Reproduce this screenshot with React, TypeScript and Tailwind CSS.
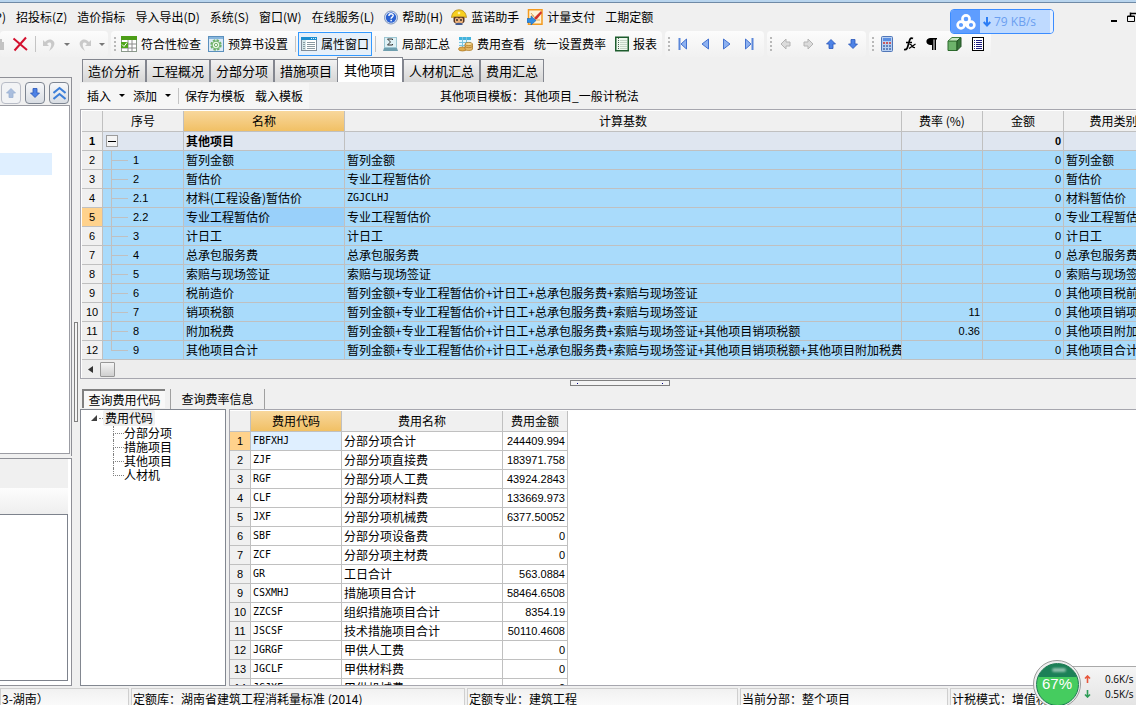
import type { ReactNode } from "react";

type FeeRow = {
  no: string;
  name: string;
  base: string;
  rate?: string;
  kind: string;
};

const FEES: FeeRow[] = [
  { no: "1", name: "暂列金额", base: "暂列金额", kind: "暂列金额" },
  { no: "2", name: "暂估价", base: "专业工程暂估价", kind: "暂估价" },
  { no: "2.1", name: "材料(工程设备)暂估价", base: "ZGJCLHJ", kind: "材料暂估价" },
  { no: "2.2", name: "专业工程暂估价", base: "专业工程暂估价", kind: "专业工程暂估价" },
  { no: "3", name: "计日工", base: "计日工", kind: "计日工" },
  { no: "4", name: "总承包服务费", base: "总承包服务费", kind: "总承包服务费" },
  { no: "5", name: "索赔与现场签证", base: "索赔与现场签证", kind: "索赔与现场签证" },
  {
    no: "6",
    name: "税前造价",
    base: "暂列金额+专业工程暂估价+计日工+总承包服务费+索赔与现场签证",
    kind: "其他项目税前造价",
  },
  {
    no: "7",
    name: "销项税额",
    base: "暂列金额+专业工程暂估价+计日工+总承包服务费+索赔与现场签证",
    rate: "11",
    kind: "其他项目销项税额",
  },
  {
    no: "8",
    name: "附加税费",
    base: "暂列金额+专业工程暂估价+计日工+总承包服务费+索赔与现场签证+其他项目销项税额",
    rate: "0.36",
    kind: "其他项目附加税费",
  },
  {
    no: "9",
    name: "其他项目合计",
    base: "暂列金额+专业工程暂估价+计日工+总承包服务费+索赔与现场签证+其他项目销项税额+其他项目附加税费",
    kind: "其他项目合计",
  },
];

const CODES = [
  ["FBFXHJ", "分部分项合计", "244409.994"],
  ["ZJF", "分部分项直接费", "183971.758"],
  ["RGF", "分部分项人工费", "43924.2843"],
  ["CLF", "分部分项材料费", "133669.973"],
  ["JXF", "分部分项机械费", "6377.50052"],
  ["SBF", "分部分项设备费", "0"],
  ["ZCF", "分部分项主材费", "0"],
  ["GR", "工日合计", "563.0884"],
  ["CSXMHJ", "措施项目合计", "58464.6508"],
  ["ZZCSF", "组织措施项目合计", "8354.19"],
  ["JSCSF", "技术措施项目合计", "50110.4608"],
  ["JGRGF", "甲供人工费", "0"],
  ["JGCLF", "甲供材料费", "0"],
  ["JGJXF", "甲供机械费", "0"],
];

const TABS = ["造价分析", "工程概况", "分部分项", "措施项目", "其他项目", "人材机汇总", "费用汇总"];

const cell = "h-[19px] overflow-hidden border-r border-b border-[#c0c0c0] p-0 px-0.5 leading-[18px] whitespace-nowrap";
const head = "h-[21px] border-r border-b border-[#c0c0c0] bg-[#f0f0f0] p-0 text-center leading-5 font-normal whitespace-nowrap";
const gold = "h-[21px] border-r border-b border-[#c0c0c0] bg-linear-to-b from-[#f8d79b] to-[#f1c064] p-0 text-center leading-5 font-normal";
const num = "block text-[11px] leading-[18px] font-['Liberation_Sans','Noto_Sans_CJK_SC',sans-serif]";
const mono = "block text-[10px] leading-[18px] font-['DejaVu_Sans_Mono',monospace]";

function Svg({ children, w = 16, h = 16 }: { children: ReactNode; w?: number; h?: number }) {
  return (
    <svg width={w} height={h} viewBox={`0 0 ${w} ${h}`} className="shrink-0" aria-hidden="true">
      {children}
    </svg>
  );
}

function BlueArrow({ down = false, pale = false }: { down?: boolean; pale?: boolean }) {
  return (
    <Svg w={10} h={10}>
      <path
        d={down ? "M3 0.5h4v4.5h2.5L5 9.5 0.5 5H3z" : "M3 9.5h4V5h2.5L5 0.5 0.5 5H3z"}
        fill={pale ? "#a9bddd" : "#4d82e6"}
        stroke={pale ? "#9bb0d2" : "#2a56b8"}
        strokeWidth="0.8"
      />
    </Svg>
  );
}

function GreyArrow({ right = false }: { right?: boolean }) {
  return (
    <Svg w={11} h={12}>
      <path
        d={right ? "M1 4h4V1l5 5-5 5V8H1z" : "M10 4H6V1L1 6l5 5V8h4z"}
        fill="#dcdcdc"
        stroke="#b4b4b4"
      />
    </Svg>
  );
}

function Caret({ grey = false }: { grey?: boolean }) {
  return (
    <Svg w={6} h={3}>
      <path d="M0 0h6L3 3z" fill={grey ? "#777" : "#000"} />
    </Svg>
  );
}

function Grip() {
  return (
    <span className="flex w-2 shrink-0 flex-col items-center gap-0.5" aria-hidden="true">
      <i className="size-0.5 bg-[#b8b8b8]" />
      <i className="size-0.5 bg-[#b8b8b8]" />
      <i className="size-0.5 bg-[#b8b8b8]" />
      <i className="size-0.5 bg-[#b8b8b8]" />
    </span>
  );
}

function Sep() {
  return <span className="h-4 w-px shrink-0 bg-[#c4c4c4]" />;
}

function Band({ children, className }: { children: ReactNode; className: string }) {
  return (
    <div
      className={`flex h-[26px] shrink-0 items-center rounded-sm bg-linear-to-b from-[#fcfcfc] to-[#f1f1f1] ${className}`}
    >
      {children}
    </div>
  );
}

function Tool({ icon, label, active = false }: { icon?: ReactNode; label: string; active?: boolean }) {
  return (
    <button
      className={
        active
          ? "flex h-6 shrink-0 items-center gap-1 border border-[#3399ff] bg-[#e6f0fa] px-0.5 whitespace-nowrap"
          : "flex h-6 shrink-0 items-center gap-1 whitespace-nowrap"
      }
    >
      {icon}
      {label}
    </button>
  );
}

function IconButton({ label, children }: { label: string; children: ReactNode }) {
  return (
    <button aria-label={label} className="flex h-5 shrink-0 items-center justify-center">
      {children}
    </button>
  );
}

function MenuBar() {
  return (
    <nav className="flex h-7 shrink-0 items-center gap-2.5 overflow-hidden whitespace-nowrap">
      <button className="flex w-1.5 justify-end overflow-hidden">P)</button>
      <button>招投标(Z)</button>
      <button>造价指标</button>
      <button>导入导出(D)</button>
      <button>系统(S)</button>
      <button>窗口(W)</button>
      <button>在线服务(L)</button>
      <button className="flex items-center gap-1">
        <Svg w={14} h={15}>
          <circle cx="7" cy="7.5" r="6.500" fill="#dfe8f6" stroke="#7b93bd" />
          <circle cx="7" cy="7.5" r="5.2" fill="#2b62d2" />
          <path d="M4.900 6c0-3 4.300-2.700 4.300-.4 0 1.500-2.100 1.500-2.100 3.100" fill="none" stroke="#fff" strokeWidth="1.4" />
          <rect x="6.400" y="9.800" width="1.500" height="1.500" fill="#fff" />
        </Svg>
        帮助(H)
      </button>
      <button className="-ml-0.5 flex items-center gap-1">
        <Svg>
          <path d="M2.500 8h11v4c0 4-11 4-11 0z" fill="#59351f" />
          <path d="M4 9.500l2-1 2 1 2-1 2 1v3c0 3-8 3-8 0z" fill="#edb37c" />
          <path d="M.5 8.500C1 3.500 4 .8 8 .8s7 2.700 7.500 7.700c-4-1.500-11-1.500-15 0z" fill="#f7cf1f" stroke="#a87b0c" strokeWidth="0.7" />
          <circle cx="8" cy="4" r="1.300" fill="#fff3a8" />
          <circle cx="6" cy="11" r="0.900" fill="#222" />
          <circle cx="10" cy="11" r="0.900" fill="#222" />
          <path d="M4.500 14.500c2-1 5-1 7 0v1.500h-7z" fill="#435b8f" />
        </Svg>
        蓝诺助手
      </button>
      <button className="-ml-0.5 flex items-center gap-1">
        <Svg>
          <rect x="1.500" y="0.750" width="13.500" height="14.500" fill="#fff3d6" stroke="#f39a1f" strokeWidth="1.500" />
          <path d="M4 4l4 5M4 7h3M9 11h4" stroke="#d8a35a" />
          <path d="M14 2L8 8l-1 3 3-1 5-6z" fill="#d1322a" />
          <path d="M0 9.500h4V7l5 4.500L4 16v-2.500H0z" fill="#2f8de4" stroke="#1762ae" strokeWidth="0.600" />
        </Svg>
        计量支付
      </button>
      <button>工期定额</button>
    </nav>
  );
}

function ToolBar() {
  return (
    <div className="flex h-[26px] shrink-0 gap-[3px] overflow-hidden">
      <Band className="w-[108px]">
        <Svg w={4}>
          <path d="M0 3h2v3h2v8H0z" fill="#c3c3c3" />
        </Svg>
        <span className="w-2" />
        <IconButton label="删除">
          <Svg>
            <path d="M1.500 2.500L15 14M14 1.500L2.500 14.500" stroke="#d4102e" strokeWidth="2" fill="none" />
          </Svg>
        </IconButton>
        <span className="w-[7px]" />
        <Sep />
        <span className="w-[7px]" />
        <IconButton label="撤销">
          <Svg w={13} h={13}>
            <path d="M0 2v6h6L4 6c3-3 6-1 3 5l-1 2c6-4 7-9 3-11C6 .8 4 2 2 4z" fill="#c9c9c9" />
          </Svg>
        </IconButton>
        <span className="w-2" />
        <Caret grey />
        <span className="w-2" />
        <IconButton label="重做">
          <Svg w={13} h={13}>
            <path d="M13 2v6H7l2-2C6 3 3 5 6 11l1 2C1 9 0 4 4 2c3-1.200 5 0 7 2z" fill="#c9c9c9" />
          </Svg>
        </IconButton>
        <span className="w-2" />
        <Caret grey />
      </Band>

      <Band className="w-[551px]">
        <Grip />
        <span className="w-0.5" />
        <Tool
          label="符合性检查"
          icon={
            <Svg>
              <rect x="0.500" y="0.500" width="15" height="15" fill="#fff" stroke="#8b9a8b" />
              <rect width="16" height="4" fill="#4c9d17" />
              <path d="M0 8h16M0 12h16M7 4v12M11 4v12" stroke="#8c8c8c" />
              <rect y="6" width="7" height="6" fill="#51a51d" />
              <path d="M1 8.500l2 2 3-4" stroke="#fff" fill="none" />
            </Svg>
          }
        />
        <span className="w-[7px]" />
        <Tool
          label="预算书设置"
          icon={
            <Svg>
              <rect x="0.500" y="0.500" width="15" height="15" fill="#dceaf6" stroke="#5b90bd" />
              <rect x="1" y="1" width="14" height="2" fill="#88b6dd" />
              <circle cx="8" cy="9" r="4.800" fill="none" stroke="#6db068" strokeWidth="1.800" strokeDasharray="2.400 1.370" />
              <circle cx="8" cy="9" r="3.900" fill="#e9f6e3" stroke="#6db068" />
              <circle cx="8" cy="9" r="1.600" fill="#fff" stroke="#6db068" />
            </Svg>
          }
        />
        <span className="w-[7px]" />
        <Sep />
        <span className="w-0.5" />
        <Tool
          active
          label="属性窗口"
          icon={
            <Svg>
              <rect x="0.500" y="1.500" width="15" height="13" fill="#fff" stroke="#7f8c99" />
              <rect y="1" width="16" height="3" fill="#1c8ed0" />
              <path d="M10 2.500h5" stroke="#d7effb" strokeDasharray="1 1" />
              <rect x="1" y="4" width="4" height="10" fill="#d3e6e9" />
              <path d="M2 6.500h2M2 8.500h2M2 10.500h2M2 12.500h2M6 6.500h8M6 8.500h8M6 10.500h8M6 12.500h8" stroke="#8a9aa2" />
            </Svg>
          }
        />
        <span className="w-[3px]" />
        <Sep />
        <span className="w-[7px]" />
        <Tool
          label="局部汇总"
          icon={
            <Svg w={15}>
              <rect x="1.500" y="1.500" width="12" height="10" fill="#dff1f5" stroke="#9cc6d2" />
              <path d="M9.500 4V3h-5l3 3-3 3h5V8" fill="none" stroke="#333" />
              <path d="M1 12h13l1 3H0z" fill="#6f9faf" />
            </Svg>
          }
        />
        <span className="w-2" />
        <Tool
          label="费用查看"
          icon={
            <Svg w={15}>
              <rect x="1" y="1" width="12" height="11" fill="#e4f6fd" />
              <rect x="1" y="1" width="12" height="3" fill="#43b3dd" />
              <path d="M1 6.500h12M1 9.500h12M4.500 1v12M8.500 1v12" stroke="#79c4df" />
              <ellipse cx="4.500" cy="13" rx="4" ry="2" fill="#e0ad4e" stroke="#a9741f" strokeWidth="0.700" />
              <path d="M7 8v5c0 2 7.500 2 7.500 0V8z" fill="#e3b765" stroke="#a9741f" strokeWidth="0.700" />
              <ellipse cx="10.750" cy="8" rx="3.700" ry="1.600" fill="#f7d992" stroke="#a9741f" strokeWidth="0.700" />
              <path d="M7 10.500c1 1.500 6.500 1.500 7.500 0" fill="none" stroke="#a9741f" strokeWidth="0.700" />
            </Svg>
          }
        />
        <span className="w-[9px]" />
        <Tool label="统一设置费率" />
        <span className="w-[9px]" />
        <Tool
          label="报表"
          icon={
            <Svg w={14}>
              <rect x="0.750" y="1.250" width="12.500" height="13.500" fill="#eef8ee" stroke="#1d5c2d" strokeWidth="1.500" />
              <path d="M3.500 2v12" stroke="#4f5f54" strokeDasharray="1 1" />
              <path d="M5 4.500h7M5 6.500h7M5 8.500h7M5 10.500h7M5 12.500h7" stroke="#c4d3c6" />
            </Svg>
          }
        />
      </Band>

      <Band className="w-[99px]">
        <Grip />
        <div className="ml-[5px] flex gap-3.5">
          <IconButton label="第一条">
            <Svg w={9} h={12}>
              <path d="M1.500 0v12" stroke="#5b87d9" strokeWidth="2" />
              <path d="M8.500 1v10L3 6z" fill="#8db1f0" stroke="#4472cf" />
            </Svg>
          </IconButton>
          <IconButton label="上一条">
            <Svg w={8} h={12}>
              <path d="M7.500 1v10L1 6z" fill="#8db1f0" stroke="#4472cf" />
            </Svg>
          </IconButton>
          <IconButton label="下一条">
            <Svg w={8} h={12}>
              <path d="M.5 1v10L7 6z" fill="#8db1f0" stroke="#4472cf" />
            </Svg>
          </IconButton>
          <IconButton label="最后一条">
            <Svg w={9} h={12}>
              <path d="M7.500 0v12" stroke="#5b87d9" strokeWidth="2" />
              <path d="M.5 1v10L6 6z" fill="#8db1f0" stroke="#4472cf" />
            </Svg>
          </IconButton>
        </div>
      </Band>

      <Band className="w-[99px]">
        <Grip />
        <div className="ml-[5px] flex gap-3">
          <IconButton label="左移">
            <GreyArrow />
          </IconButton>
          <IconButton label="右移">
            <GreyArrow right />
          </IconButton>
          <IconButton label="上移">
            <BlueArrow />
          </IconButton>
          <IconButton label="下移">
            <BlueArrow down />
          </IconButton>
        </div>
      </Band>

      <Band className="w-[122px]">
        <Grip />
        <div className="ml-1 flex gap-2.5">
          <IconButton label="计算器">
            <Svg w={12}>
              <rect x="0.500" y="0.500" width="11" height="15" rx="1" fill="#b9d0f1" stroke="#5177b8" />
              <rect x="2" y="2" width="8" height="3" fill="#5a8ee2" />
              <path d="M2 7h8" stroke="#c33" strokeWidth="1.500" strokeDasharray="2 1" />
              <path d="M2 10h8M2 13h8" stroke="#4468ad" strokeWidth="1.500" strokeDasharray="2 1" />
            </Svg>
          </IconButton>
          <IconButton label="函数">
            <Svg w={13} h={14}>
              <path d="M10 1.500C7 0 6.500 3 5.500 7S4 13 1 12.500M3 5.500h6" fill="none" stroke="#000" strokeWidth="1.700" />
              <path d="M6.500 7.500c3-1 2 4 5.500 3M12.500 7L6 11.500" fill="none" stroke="#000" strokeWidth="1.200" />
            </Svg>
          </IconButton>
          <IconButton label="段落">
            <Svg w={11} h={12}>
              <path d="M4 0h7v1.500h-1V12H8.500V1.500h-1V12H6V7H4C-.8 6.500-.8.5 4 0z" />
            </Svg>
          </IconButton>
          <IconButton label="三维">
            <Svg w={15} h={14}>
              <path d="M1 4h9v9.500H1z" fill="#6db36b" stroke="#2c6a2c" />
              <path d="M1 4l4-3.500h9L10 4z" fill="#c9e8c4" stroke="#3f7d3d" />
              <path d="M14 .5v9l-4 4V4z" fill="#38763a" stroke="#225324" />
            </Svg>
          </IconButton>
          <IconButton label="列表">
            <Svg w={12} h={14}>
              <rect x="0.500" y="0.500" width="11" height="13" fill="#fff" stroke="#000" />
              <path d="M2 3.500h1M2 5.500h1M2 7.500h1M2 9.500h1M2 11.500h1M4 3.500h6M4 5.500h6M4 7.500h6M4 9.500h6M4 11.500h6" stroke="#1c1c80" />
            </Svg>
          </IconButton>
        </div>
      </Band>
    </div>
  );
}

function Sidebar() {
  const square =
    "flex h-[22px] w-5 items-center justify-center rounded-sm border border-[#7d8591] bg-linear-to-b from-[#f7f8fa] to-[#d9dde3]";
  return (
    <aside className="mt-5 flex w-[72px] shrink-0 flex-col">
      <section className="flex flex-[5] flex-col border-t border-r border-[#8f9097] bg-[#f0f0f0]">
        <div className="flex h-[27px] shrink-0 items-center gap-1 pt-0.5 pl-px">
          <button aria-label="上移" className="flex h-[22px] w-5 items-center justify-center rounded-sm border border-[#b8bcc6] bg-[#f2f3f5]">
            <BlueArrow pale />
          </button>
          <button aria-label="下移" className={square}>
            <BlueArrow down />
          </button>
          <button aria-label="收起" className={square}>
            <Svg w={13} h={14}>
              <path d="M0.500 7l6-5 6 5M0.500 13l6-5 6 5" fill="none" stroke="#3c7fd9" strokeWidth="2" />
            </Svg>
          </button>
        </div>
        <div className="mr-px mb-0.5 flex-1 border-t border-r border-b border-[#9b9ca3] bg-white pt-[47px]">
          <div className="h-[22px] w-[52px] bg-[#dfefff]" />
        </div>
      </section>
      <section className="mt-0.5 flex flex-[3] flex-col border-t border-r border-b border-[#8f9097] bg-white">
        <div className="mr-[3px] h-[29px] bg-[#f0f0f0]" />
        <div className="mr-[3px] h-[26px] bg-linear-to-b from-[#fdfdfd] to-[#eeeeee]" />
        <div className="mr-[3px] mb-1 flex-1 border-t border-r border-b border-[#7d828c]" />
      </section>
    </aside>
  );
}

function Branch({ last }: { last: boolean }) {
  return (
    <span className="ml-1.5 flex w-[17px] flex-col">
      <i className="h-[10px] border-b border-l border-[#c0c0c0]" />
      <i className={last ? "h-2" : "h-2 border-l border-[#c0c0c0]"} />
    </span>
  );
}

function FeeGrid() {
  return (
    <div className="overflow-hidden border-t border-b border-l border-[#a6a6ae] bg-white pt-px pl-px">
      <table className="w-[1082px] table-fixed border-separate border-spacing-0">
        <colgroup>
          <col className="w-[21px]" />
          <col className="w-[81px]" />
          <col className="w-[161px]" />
          <col className="w-[557px]" />
          <col className="w-[81px]" />
          <col className="w-[81px]" />
          <col className="w-[100px]" />
        </colgroup>
        <thead>
          <tr>
            <th className={head} />
            <th className={head}>序号</th>
            <th className={gold}>名称</th>
            <th className={head}>计算基数</th>
            <th className={head}>费率 (%)</th>
            <th className={head}>金额</th>
            <th className={head}>费用类别</th>
          </tr>
        </thead>
        <tbody>
          <tr className="bg-[#dfe6f0] font-bold">
            <td className={`${cell} bg-[#f0f0f0] text-center`}>
              <span className={num}>1</span>
            </td>
            <td className={cell}>
              <button
                aria-label="折叠"
                className="ml-px flex size-3 items-center justify-center border border-[#9c9c9c] bg-[#f4f4f4]"
              >
                <i className="h-px w-2 bg-black" />
              </button>
            </td>
            <td className={cell}>其他项目</td>
            <td className={cell} />
            <td className={cell} />
            <td className={`${cell} text-right`}>
              <span className={num}>0</span>
            </td>
            <td className={cell} />
          </tr>
          {FEES.map((fee, i) => (
            <tr key={fee.no} className="bg-[#a9dbfb]">
              <td className={i === 3 ? `${cell} bg-[#ffd28c] text-center` : `${cell} bg-[#f0f0f0] text-center`}>
                <span className={num}>{i + 2}</span>
              </td>
              <td className={cell}>
                <div className="flex h-[18px]">
                  <Branch last={i === FEES.length - 1} />
                  <span className={`${num} ml-[5px]`}>{fee.no}</span>
                </div>
              </td>
              <td className={i === 3 ? `${cell} bg-[#99d0fa]` : cell}>{fee.name}</td>
              <td className={cell}>{i === 2 ? <span className={mono}>{fee.base}</span> : fee.base}</td>
              <td className={`${cell} text-right`}>
                <span className={num}>{fee.rate}</span>
              </td>
              <td className={`${cell} text-right`}>
                <span className={num}>0</span>
              </td>
              <td className={cell}>{fee.kind}</td>
            </tr>
          ))}
        </tbody>
      </table>
      <div className="flex h-[18px] items-center bg-[#ededed] pl-1.5">
        <button aria-label="向左滚动" className="w-3">
          <Svg w={5} h={7}>
            <path d="M5 0v7L0 3.500z" fill="#333" />
          </Svg>
        </button>
        <span className="h-[15px] w-[15px] rounded-[1px] border border-[#979797] bg-linear-to-b from-[#f5f5f5] to-[#cfcfcf]" />
      </div>
    </div>
  );
}

function CodePanel() {
  return (
    <div className="flex min-h-0 flex-1 gap-[3px]">
      <div className="w-[146px] shrink-0 border border-[#828790] bg-white">
        <div className="flex h-4 items-center pl-2.5">
          <Svg w={6} h={6}>
            <path d="M6 0v6H0z" fill="#404040" />
          </Svg>
          <span className="ml-0.5 w-1 border-t border-dotted border-[#808080]" />
          <button className="h-4 rounded-xs bg-[#f0f0f0] px-0.5 leading-4">费用代码</button>
        </div>
        <ul className="ml-8">
          {["分部分项", "措施项目", "其他项目", "人材机"].map((label, i) => (
            <li key={label} className="flex h-3.5">
              <span className="flex w-[11px] flex-col">
                <i className="h-2 border-b border-l border-dotted border-[#808080]" />
                <i className={i === 3 ? "h-1.5" : "h-1.5 border-l border-dotted border-[#808080]"} />
              </span>
              <button className="leading-[14px]">{label}</button>
            </li>
          ))}
        </ul>
      </div>

      <div className="min-w-0 flex-1 overflow-hidden border-t border-b border-l border-[#a6a6ae] bg-white pt-px">
        <table className="w-[338px] table-fixed border-separate border-spacing-0">
          <colgroup>
            <col className="w-[21px]" />
            <col className="w-[91px]" />
            <col className="w-[161px]" />
            <col className="w-[65px]" />
          </colgroup>
          <thead>
            <tr>
              <th className={head} />
              <th className={gold}>费用代码</th>
              <th className={head}>费用名称</th>
              <th className={head}>费用金额</th>
            </tr>
          </thead>
          <tbody>
            {CODES.map(([code, name, amount], i) => (
              <tr key={code}>
                <td className={i === 0 ? `${cell} bg-[#ffd28c] text-center` : `${cell} bg-[#f0f0f0] text-center`}>
                  <span className={num}>{i + 1}</span>
                </td>
                <td className={i === 0 ? `${cell} bg-[#dfefff]` : cell}>
                  <span className={mono}>{code}</span>
                </td>
                <td className={cell}>{name}</td>
                <td className={`${cell} text-right`}>
                  <span className={num}>{amount}</span>
                </td>
              </tr>
            ))}
          </tbody>
        </table>
      </div>
    </div>
  );
}

function StatusBar() {
  const pane =
    "shrink-0 overflow-hidden border-t border-r border-l border-[#cfcfcf] bg-linear-to-b from-[#f1f1f1] to-[#fafafa] pl-px leading-5 whitespace-nowrap";
  return (
    <footer className="flex h-[17px] shrink-0 gap-0.5 overflow-hidden">
      <div className={`${pane} w-[129px]`}>3-湖南）</div>
      <div className={`${pane} w-[334px]`}>定额库：湖南省建筑工程消耗量标准 (2014)</div>
      <div className={`${pane} w-[271px]`}>定额专业：建筑工程</div>
      <div className={`${pane} w-[208px]`}>当前分部：整个项目</div>
      <div className={`${pane} flex-1`}>计税模式：增值税</div>
    </footer>
  );
}

// Desktop gadgets that float above the application window
function CloudBadge() {
  return (
    <div className="absolute top-[9px] right-[82px] flex h-[25px] w-[104px] items-center overflow-hidden rounded-sm border border-[#3b8cff] bg-[#bfdaff]">
      <span className="flex h-full w-[29px] items-center justify-center bg-[#5e9dff]">
        <Svg w={20}>
          <g fill="none" stroke="#fff" strokeWidth="2.600">
            <circle cx="10" cy="5" r="3.600" />
            <circle cx="5" cy="11" r="3.400" />
            <circle cx="15" cy="11" r="3.400" />
            <path d="M7.500 8.500l5 5" />
          </g>
        </Svg>
      </span>
      <span className="ml-[3px] flex">
        <Svg w={8} h={10}>
          <path d="M4 0v8M.7 5L4 8.500 7.300 5" fill="none" stroke="#2c7df5" strokeWidth="2" />
        </Svg>
      </span>
      <span className="ml-[3px] font-['Open_Sans','Noto_Sans',sans-serif] text-xs whitespace-nowrap text-[#6b9ff0]">79 KB/s</span>
      <span className="ml-auto h-full w-[3px] bg-[#e6f0ff]" />
    </div>
  );
}

function SpeedBall() {
  return (
    <div className="absolute right-0 bottom-0 h-[45px] w-[103px] overflow-hidden">
      <div className="absolute right-0 bottom-0 flex h-[39px] w-[80px] flex-col justify-center gap-px border-t border-[#a9a9a9] bg-linear-to-b from-[#f5f5f5] to-[#e4e4e4] pl-7 font-['Open_Sans','Noto_Sans',sans-serif] text-[10px] leading-[14px] whitespace-nowrap">
        <span className="flex items-center gap-3.5">
          <Svg w={7} h={8}>
            <path d="M3.500 8V1M1 3.500L3.500 1 6 3.500" fill="none" stroke="#e8573c" strokeWidth="1.600" />
          </Svg>
          0.6K/s
        </span>
        <span className="flex items-center gap-3.5">
          <Svg w={7} h={8}>
            <path d="M3.500 0v7M1 4.500L3.500 7 6 4.500" fill="none" stroke="#2e9c57" strokeWidth="1.600" />
          </Svg>
          0.5K/s
        </span>
      </div>
      <div className="absolute top-0 left-0 flex size-12 items-center justify-center rounded-full border border-[#9a9a9a] bg-[#eeeeee]">
        <div className="relative flex size-[43px] items-center justify-center rounded-full border border-[#1c7a52] bg-linear-to-b from-[#1c8057] from-32% to-[#45cc5f] to-32% font-['Liberation_Sans',sans-serif] text-[15px] text-white">
          <span className="absolute top-1 left-[15px] h-1 w-3.5 rounded-full bg-white/50 blur-[1px]" />
          67%
        </div>
      </div>
    </div>
  );
}

function WindowControls() {
  return (
    <div className="absolute top-2.5 right-0 flex items-end gap-2.5">
      <button aria-label="最小化" className="flex h-3 w-1.5 items-end">
        <i className="h-0.5 w-1.5 bg-black" />
      </button>
      <button aria-label="还原" className="flex">
        <Svg w={9} h={11}>
          <path d="M3 2.500h6M3.500 1.500V5" stroke="#000" fill="none" strokeWidth="1.500" />
          <path d="M.5 5h7v5.500h-7zM0 5.500h8" fill="#f0f0f0" stroke="#000" />
        </Svg>
      </button>
    </div>
  );
}

export default function App() {
  return (
    <div className="relative flex h-screen flex-col overflow-hidden bg-[#f0f0f0] font-['Noto_Sans_CJK_SC','Liberation_Sans',sans-serif] text-xs text-black">
      <div className="h-[3px] shrink-0 border-b border-[#6f8aa6] bg-[#b9d5ee]" />
      <MenuBar />
      <ToolBar />

      <div className="flex min-h-0 flex-1">
        <Sidebar />
        <div className="flex w-2 shrink-0 flex-col items-center justify-center">
          <span className="h-[100px] w-1 border border-[#808080] bg-[#f4f4f4]" />
        </div>

        <main className="flex min-w-0 flex-1 flex-col">
          <div className="flex h-[25px] shrink-0 items-end pl-0.5 text-[13px]">
            {TABS.map((tab, i) => (
              <button
                key={tab}
                className={
                  i === 4
                    ? "-ml-px h-[25px] border-t border-r border-l border-[#83868f] bg-white px-1.5 whitespace-nowrap"
                    : "h-[23px] border-t border-r border-l border-[#83868f] bg-linear-to-b from-[#f2f2f2] to-[#d6d6d6] px-[5px] whitespace-nowrap"
                }
              >
                {tab}
              </button>
            ))}
          </div>

          <div className="flex h-[27px] shrink-0 items-center">
            <div className="flex h-[26px] w-[229px] shrink-0 items-center bg-[#f6f6f6] pl-[7px] whitespace-nowrap">
              <button className="flex items-center gap-2">
                插入 <Caret />
              </button>
              <button className="ml-2 flex items-center gap-2">
                添加 <Caret />
              </button>
              <span className="w-[7px]" />
              <Sep />
              <button className="ml-1.5">保存为模板</button>
              <button className="ml-2.5">载入模板</button>
            </div>
            <p className="ml-[131px] whitespace-nowrap">其他项目模板：其他项目_一般计税法</p>
          </div>

          <FeeGrid />

          <div className="flex h-[9px] shrink-0 items-start pt-px pl-[490px]">
            <span className="flex h-1.5 w-[100px] items-center justify-between border border-[#808080] bg-[#f4f4f4] px-1.5">
              <i className="size-px bg-[#000080]" />
              <i className="size-px bg-[#000080]" />
            </span>
          </div>

          <div className="flex h-[21px] shrink-0 items-center pl-0.5 whitespace-nowrap">
            <button className="h-[19px] w-[83px] border-t-2 border-l-2 border-[#808080] bg-[#f8f8f8] leading-[17px]">
              查询费用代码
            </button>
            <span className="ml-[5px] h-5 w-px bg-[#a0a0a0]" />
            <button className="w-[93px] leading-5">查询费率信息</button>
            <span className="h-5 w-px bg-[#a0a0a0]" />
          </div>

          <CodePanel />
        </main>
      </div>

      <div className="h-0.5 shrink-0" />
      <StatusBar />
      <WindowControls />
      <CloudBadge />
      <SpeedBall />
    </div>
  );
}
